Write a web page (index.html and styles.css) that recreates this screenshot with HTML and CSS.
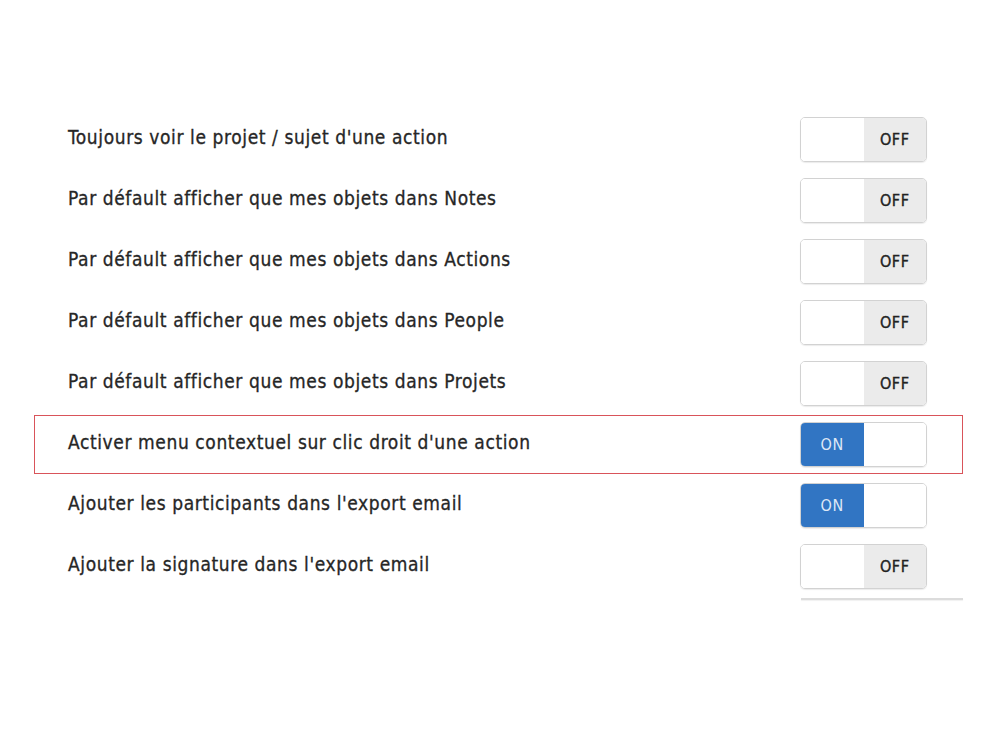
FILE: index.html
```html
<!DOCTYPE html>
<html lang="fr">
<head>
<meta charset="utf-8">
<title>Paramètres</title>
<link rel="stylesheet" href="styles.css">
</head>
<body>
<div class="settings">
  <div class="row"><span class="label">Toujours voir le projet / sujet d'une action</span><div class="switch off"><span class="half"></span><span class="half state">OFF</span></div></div>
  <div class="row"><span class="label">Par défault afficher que mes objets dans Notes</span><div class="switch off"><span class="half"></span><span class="half state">OFF</span></div></div>
  <div class="row"><span class="label">Par défault afficher que mes objets dans Actions</span><div class="switch off"><span class="half"></span><span class="half state">OFF</span></div></div>
  <div class="row"><span class="label">Par défault afficher que mes objets dans People</span><div class="switch off"><span class="half"></span><span class="half state">OFF</span></div></div>
  <div class="row"><span class="label">Par défault afficher que mes objets dans Projets</span><div class="switch off"><span class="half"></span><span class="half state">OFF</span></div></div>
  <div class="row highlight"><span class="label">Activer menu contextuel sur clic droit d'une action</span><div class="switch on"><span class="half state">ON</span><span class="half"></span></div></div>
  <div class="row"><span class="label">Ajouter les participants dans l'export email</span><div class="switch on"><span class="half state">ON</span><span class="half"></span></div></div>
  <div class="row"><span class="label">Ajouter la signature dans l'export email</span><div class="switch off"><span class="half"></span><span class="half state">OFF</span></div></div>
  <div class="row partial"><div class="cut"></div></div>
</div>
</body>
</html>
```
FILE: styles.css
```css
html, body {
  margin: 0;
  padding: 0;
  background: #ffffff;
}
body {
  font-family: "DejaVu Sans Condensed", "Liberation Sans", sans-serif;
  color: #262626;
}
.settings {
  margin: 110px 0 0 34px;
  width: 929px;
  display: flex;
  flex-direction: column;
  gap: 2px;
}
.row {
  box-sizing: border-box;
  height: 59px;
  border: 1px solid transparent;
  display: flex;
  align-items: center;
  justify-content: space-between;
  padding: 0 35px 0 33px;
}
.row.highlight {
  border-color: #d9545a;
}
.label {
  font-size: 19px;
  padding-bottom: 5px;
  letter-spacing: 0.6px;
  -webkit-text-stroke: 0.3px #262626;
}
.switch {
  box-sizing: border-box;
  width: 127px;
  height: 45px;
  border: 1px solid #d2d2d2;
  border-radius: 5px;
  display: flex;
  overflow: hidden;
  box-shadow: 0 1px 1px rgba(0,0,0,0.08);
}
.half {
  flex: 1;
  display: flex;
  align-items: center;
  justify-content: center;
  font-size: 16px;
  letter-spacing: 0.6px;
  padding-bottom: 1px;
  background: #ffffff;
}
.off .state {
  background: #ebebeb;
  color: #222222;
  -webkit-text-stroke: 0.35px #222222;
}
.on .state {
  background: #3175c3;
  color: #dde8f6;
}
.row.partial {
  height: 20px;
  align-items: flex-start;
  justify-content: flex-end;
  padding: 0;
  border: 0;
}
.cut {
  width: 162px;
  height: 2px;
  background: #dcdcdc;
  box-shadow: 0 1px 1px rgba(0,0,0,0.06);
}
```
